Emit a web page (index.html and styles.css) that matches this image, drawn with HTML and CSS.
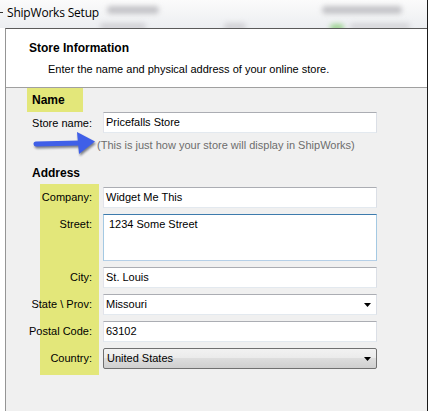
FILE: index.html
```html
<!DOCTYPE html>
<html>
<head>
<meta charset="utf-8">
<link rel="stylesheet" href="styles.css">
</head>
<body>
<div class="screen">
  <div class="topbar">
    <div class="tb-row1">
      <span class="dash"></span>
      <span class="title">ShipWorks Setup</span>
      <span class="blur b1"></span>
      <span class="blur b2"></span>
    </div>
    <div class="tb-row2">
      <span class="blur b3"></span>
      <span class="blur b4"></span>
      <span class="blur b5"></span>
      <span class="blur b6"></span>
    </div>
  </div>
  <div class="window">
    <div class="header">
      <div class="h-title">Store Information</div>
      <div class="h-sub">Enter the name and physical address of your online store.</div>
    </div>
    <div class="content">
      <div class="sec-name">Name</div>
      <div class="store-row">
        <div class="store-label">Store name:</div>
        <div class="input">Pricefalls Store</div>
      </div>
      <div class="hint-row">
        <svg class="arrow" width="64" height="24" viewBox="0 0 64 24">
          <defs>
            <filter id="sh" x="-30%" y="-60%" width="160%" height="220%">
              <feGaussianBlur stdDeviation="1.1"/>
            </filter>
          </defs>
          <g filter="url(#sh)" opacity="0.55" transform="translate(1,2)">
            <path d="M3 11 L46 10" stroke="#1c2030" stroke-width="5" stroke-linecap="round" fill="none"/>
            <path d="M44 -1 L62 8.5 L46 21 Z" fill="#1c2030"/>
          </g>
          <path d="M3 11 L46 10" stroke="#3f5fe8" stroke-width="5" stroke-linecap="round" fill="none"/>
          <path d="M44 -1 L62 8.5 L46 21 Z" fill="#3f5fe8"/>
        </svg>
        <span class="hint">(This is just how your store will display in ShipWorks)</span>
      </div>
      <div class="sec-address">Address</div>
      <div class="addr">
        <div class="labels">
          <div class="lab">Company:</div>
          <div class="lab tall">Street:</div>
          <div class="lab">City:</div>
          <div class="lab">State \ Prov:</div>
          <div class="lab">Postal Code:</div>
          <div class="lab">Country:</div>
        </div>
        <div class="fields">
          <div class="input">Widget Me This</div>
          <div class="input area">1234 Some Street</div>
          <div class="input">St. Louis</div>
          <div class="input combo">Missouri
            <svg class="caret" width="7" height="4" viewBox="0 0 7 4"><path d="M0 0 H7 L3.5 4 Z" fill="#000"/></svg>
          </div>
          <div class="input">63102</div>
          <div class="input combo button">United States
            <svg class="caret" width="7" height="4" viewBox="0 0 7 4"><path d="M0 0 H7 L3.5 4 Z" fill="#000"/></svg>
          </div>
        </div>
      </div>
    </div>
  </div>
</div>
</body>
</html>
```
FILE: styles.css
```css
html, body {
  margin: 0;
  padding: 0;
  background: #ffffff;
}
body {
  font-family: "Liberation Sans", Arial, sans-serif;
  font-size: 11px;
  color: #000;
}
.screen {
  width: 428px;
  height: 411px;
  box-sizing: border-box;
  border-right: 1px solid #1a1a1a;
  overflow: hidden;
  display: flex;
  flex-direction: column;
}
.topbar {
  height: 28px;
  flex: none;
  overflow: hidden;
  background: linear-gradient(#fbfbfb, #eceef1);
}
.tb-row1 {
  height: 22px;
  display: flex;
  align-items: center;
}
.dash {
  width: 3px;
  height: 1px;
  background: #333;
  margin-top: 2px;
}
.title {
  font-family: "Open Sans", "Noto Sans", sans-serif;
  font-size: 12px;
  margin-left: 4px;
  margin-top: 2px;
  color: #000;
  letter-spacing: -0.2px;
}
.blur {
  display: block;
  height: 8px;
  background: #c4c4c8;
  filter: blur(2.6px);
  border-radius: 4px;
}
.b1 { margin-left: 8px; width: 52px; margin-top: -2px; }
.b2 { margin-left: auto; margin-right: 25px; width: 80px; margin-top: -2px; }
.tb-row2 {
  height: 6px;
  display: flex;
  align-items: flex-start;
}
.b3 { margin-left: 100px; width: 46px; height: 7px; margin-top: 1px; background: #d2d2d6; }
.b4 { margin-left: 78px; width: 22px; height: 7px; margin-top: 1px; background: #d2d2d6; }
.b5 {
  margin-left: 84px;
  width: 14px;
  height: 7px;
  background: #9fd494;
  margin-top: 2px;
}
.b6 { margin-left: 6px; width: 60px; height: 7px; margin-top: 1px; background: #d6d6da; }

.window {
  flex: 1;
  margin-left: 5px;
  border-left: 1px solid #959595;
  border-top: 1px solid #5a5a5a;
  background: #f0f0f0;
  display: flex;
  flex-direction: column;
}
.header {
  height: 59px;
  box-sizing: border-box;
  background: #ffffff;
  border-bottom: 1px solid #a0a0a0;
  padding: 12px 0 0 23px;
}
.h-title {
  font-weight: bold;
  font-size: 12px;
  line-height: 14px;
}
.h-sub {
  margin-top: 8px;
  padding-left: 19px;
  line-height: 13px;
}
.content {
  padding-left: 21px;
}
.sec-name {
  width: 56px;
  height: 24px;
  box-sizing: border-box;
  padding: 5px 0 0 5px;
  background: #e3e77a;
  font-weight: bold;
  font-size: 12px;
  line-height: 14px;
}
.store-row {
  display: flex;
  align-items: center;
}
.store-label {
  width: 65px;
  text-align: right;
  padding-right: 7px;
  white-space: nowrap;
}
.input {
  width: 274px;
  height: 21px;
  box-sizing: border-box;
  margin-left: 4px;
  background: #ffffff;
  border: 1px solid #dde2e8;
  border-top-color: #abadb3;
  border-left-color: #e2e3ea;
  border-right-color: #dbdfe6;
  border-bottom-color: #e3e9ef;
  padding-left: 2px;
  line-height: 19px;
  white-space: nowrap;
  display: flex;
  align-items: center;
}
.hint-row {
  display: flex;
  align-items: center;
  height: 24px;
}
.arrow {
  margin-left: 6px;
  overflow: visible;
  flex: none;
}
.hint {
  color: #6d6d6d;
  line-height: 13px;
  margin-top: 1px;
}
.sec-address {
  margin-top: 9px;
  padding-left: 5px;
  font-weight: bold;
  font-size: 12px;
  line-height: 14px;
}
.addr {
  display: flex;
  margin-top: 4px;
  margin-left: 13px;
}
.labels {
  width: 59px;
  box-sizing: border-box;
  background: #e3e77a;
  padding: 3px 7px 6px 0;
  display: flex;
  flex-direction: column;
  gap: 6px;
}
.lab {
  height: 21px;
  line-height: 21px;
  display: flex;
  justify-content: flex-end;
  white-space: nowrap;
}
.lab.tall {
  height: 47px;
}
.fields {
  padding-top: 3px;
  display: flex;
  flex-direction: column;
  gap: 6px;
}
.fields .input {
  margin-left: 4px;
}
.input.area {
  height: 47px;
  align-items: flex-start;
  padding: 3px 0 0 5px;
  line-height: 13px;
  border-top-color: #3d7bad;
  border-left-color: #a4c9e3;
  border-right-color: #a4c9e3;
  border-bottom-color: #b5cfe7;
}
.combo {
  justify-content: space-between;
  padding-right: 5px;
}
.caret {
  flex: none;
}
.combo.button {
  border: 1px solid #707070;
  border-radius: 2px;
  background: linear-gradient(#f2f2f2 0%, #ebebeb 45%, #dddddd 50%, #cfcfcf 100%);
  padding-left: 3px;
}
```
